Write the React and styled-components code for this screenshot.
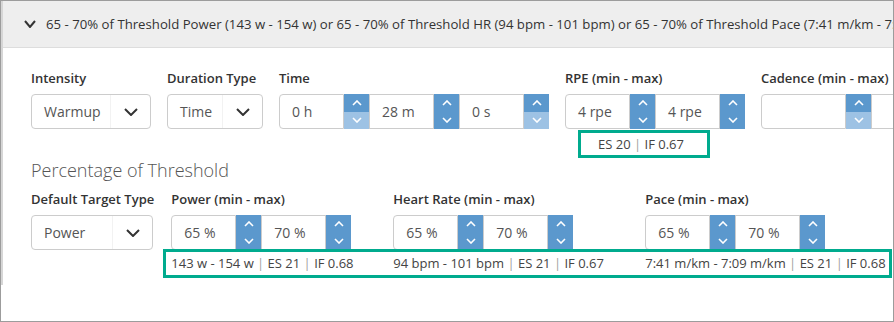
import React from "react";
import styled, { createGlobalStyle } from "styled-components";

const GlobalStyle = createGlobalStyle`
  body {
    margin: 0;
    background: #fff;
    font-family: "Open Sans", "Liberation Sans", sans-serif;
    color: #333;
  }
`;

const Frame = styled.div`
  width: 894px;
  height: 322px;
  box-sizing: border-box;
  border: 1px solid #9c9c9c;
  overflow: hidden;
`;

const Panel = styled.div`
  height: 284px;
  border-left: 2px solid #d6d6d6;
`;

const Header = styled.div`
  height: 46px;
  background: #eeeeee;
  border-bottom: 1px solid #dddddd;
  display: flex;
  align-items: center;
  gap: 10px;
  padding-left: 21px;
  font-size: 13.2px;
  white-space: nowrap;
  overflow: hidden;
  color: #333;
  svg {
    flex-shrink: 0;
  }
`;

const HeaderText = styled.span`
  flex-shrink: 0;
`;

const Body = styled.div`
  padding: 21px 0 0 28px;
`;

const Row = styled.div`
  display: flex;
  align-items: flex-start;
  gap: ${(p) => p.$gap || 16}px;
`;

const Field = styled.div`
  display: flex;
  flex-direction: column;
  flex-shrink: 0;
`;

const Label = styled.div`
  font-size: 13px;
  font-weight: 600;
  line-height: 18px;
  margin-bottom: 7px;
  white-space: nowrap;
  color: #333;
`;

const Select = styled.div`
  width: ${(p) => p.$width}px;
  height: 35px;
  box-sizing: border-box;
  border: 1px solid #cccccc;
  border-radius: 4px;
  display: flex;
  align-items: stretch;
  font-size: 14px;
  color: #555;
  .value {
    flex: 1;
    display: flex;
    align-items: center;
    padding-left: 12px;
  }
  .arrow {
    width: 39px;
    display: flex;
    align-items: center;
    justify-content: center;
    border-left: 1px solid #f2f2f2;
  }
`;

const InputGroup = styled.div`
  display: flex;
  height: 35px;
`;

const NumberBox = styled.div`
  width: ${(p) => p.$width || 65}px;
  height: 35px;
  box-sizing: border-box;
  border: 1px solid #cccccc;
  border-radius: ${(p) => (p.$first ? "4px 0 0 4px" : "0")};
  display: flex;
  align-items: center;
  padding-left: 12px;
  font-size: 14px;
  color: #555;
`;

const Spinner = styled.div`
  width: 25px;
  display: flex;
  flex-direction: column;
`;

const SpinHalf = styled.div`
  flex: 1;
  display: flex;
  align-items: center;
  justify-content: center;
  background: ${(p) => (p.$light ? "#9dc2e4" : "#5b98cd")};
`;

const SummaryBox = styled.div`
  margin: 1px 0 0 13px;
  width: 132px;
  height: 28px;
  box-sizing: border-box;
  border: 3px solid #00ab8e;
  padding-left: 17px;
  font-size: 13px;
  line-height: 22px;
  color: #444;
`;

const Heading = styled.div`
  font-size: 18px;
  font-weight: 300;
  line-height: 24px;
  color: #555;
  margin: 0 0 8px;
`;

const TargetGrid = styled.div`
  display: grid;
  grid-template-columns: 181px 211px auto;
  column-gap: 41px;
  align-items: start;
`;

const Strip = styled.div`
  grid-column: 1 / -1;
  display: grid;
  grid-template-columns: 181px 211px auto;
  column-gap: 41px;
  width: 729px;
  height: 29px;
  box-sizing: border-box;
  margin: -1px 0 0 -8px;
  padding-left: 5px;
  border: 3px solid #00ab8e;
  font-size: 13px;
  line-height: 23px;
  color: #444;
  white-space: nowrap;
`;

const Pipe = styled.span`
  color: #a0a0a0;
`;

function Chevron({ w = 14, h = 8, color = "#333", sw = 2 }) {
  return (
    <svg width={w} height={h} viewBox={`0 0 ${w} ${h}`}>
      <polyline
        points={`1,1 ${w / 2},${h - 1} ${w - 1},1`}
        fill="none"
        stroke={color}
        strokeWidth={sw}
      />
    </svg>
  );
}

function Caret({ up }) {
  return (
    <svg width="10" height="6" viewBox="0 0 10 6">
      <polyline
        points={up ? "1,5 5,1 9,5" : "1,1 5,5 9,1"}
        fill="none"
        stroke="#fff"
        strokeWidth="1.6"
      />
    </svg>
  );
}

function Spin({ lightDown }) {
  return (
    <Spinner>
      <SpinHalf>
        <Caret up />
      </SpinHalf>
      <SpinHalf $light={lightDown}>
        <Caret />
      </SpinHalf>
    </Spinner>
  );
}

function SelectBox({ width, value }) {
  return (
    <Select $width={width}>
      <div className="value">{value}</div>
      <div className="arrow">
        <Chevron />
      </div>
    </Select>
  );
}

function Summary({ parts }) {
  return (
    <div>
      {parts.map((p, i) => (
        <React.Fragment key={i}>
          {i > 0 && <Pipe> | </Pipe>}
          {p}
        </React.Fragment>
      ))}
    </div>
  );
}

export default function App() {
  return (
    <>
      <GlobalStyle />
      <Frame>
        <Panel>
          <Header>
            <Chevron w={12} h={8} />
            <HeaderText>
              65 - 70% of Threshold Power (143 w - 154 w) or 65 - 70% of Threshold HR (94 bpm - 101 bpm) or 65 - 70% of
              Threshold Pace (7:41 m/km - 7:09 m/km)
            </HeaderText>
          </Header>
          <Body>
            <Row>
              <Field>
                <Label>Intensity</Label>
                <SelectBox width={120} value="Warmup" />
              </Field>
              <Field>
                <Label>Duration Type</Label>
                <SelectBox width={96} value="Time" />
              </Field>
              <Field>
                <Label>Time</Label>
                <InputGroup>
                  <NumberBox $first>0 h</NumberBox>
                  <Spin lightDown />
                  <NumberBox>28 m</NumberBox>
                  <Spin />
                  <NumberBox>0 s</NumberBox>
                  <Spin lightDown />
                </InputGroup>
              </Field>
              <Field>
                <Label>RPE (min - max)</Label>
                <InputGroup>
                  <NumberBox $first>4 rpe</NumberBox>
                  <Spin />
                  <NumberBox>4 rpe</NumberBox>
                  <Spin />
                </InputGroup>
                <SummaryBox>
                  <Summary parts={["ES 20", "IF 0.67"]} />
                </SummaryBox>
              </Field>
              <Field>
                <Label>Cadence (min - max)</Label>
                <InputGroup>
                  <NumberBox $first $width={85}></NumberBox>
                  <Spin lightDown />
                  <NumberBox $width={85}></NumberBox>
                  <Spin lightDown />
                </InputGroup>
              </Field>
            </Row>

            <Heading>Percentage of Threshold</Heading>

            <Row $gap={17}>
              <Field>
                <Label>Default Target Type</Label>
                <SelectBox width={122} value="Power" />
              </Field>
              <TargetGrid>
                <Field>
                  <Label>Power (min - max)</Label>
                  <InputGroup>
                    <NumberBox $first>65 %</NumberBox>
                    <Spin />
                    <NumberBox>70 %</NumberBox>
                    <Spin />
                  </InputGroup>
                </Field>
                <Field>
                  <Label>Heart Rate (min - max)</Label>
                  <InputGroup>
                    <NumberBox $first>65 %</NumberBox>
                    <Spin />
                    <NumberBox>70 %</NumberBox>
                    <Spin />
                  </InputGroup>
                </Field>
                <Field>
                  <Label>Pace (min - max)</Label>
                  <InputGroup>
                    <NumberBox $first>65 %</NumberBox>
                    <Spin />
                    <NumberBox>70 %</NumberBox>
                    <Spin />
                  </InputGroup>
                </Field>
                <Strip>
                  <Summary parts={["143 w - 154 w", "ES 21", "IF 0.68"]} />
                  <Summary parts={["94 bpm - 101 bpm", "ES 21", "IF 0.67"]} />
                  <Summary parts={["7:41 m/km - 7:09 m/km", "ES 21", "IF 0.68"]} />
                </Strip>
              </TargetGrid>
            </Row>
          </Body>
        </Panel>
      </Frame>
    </>
  );
}
